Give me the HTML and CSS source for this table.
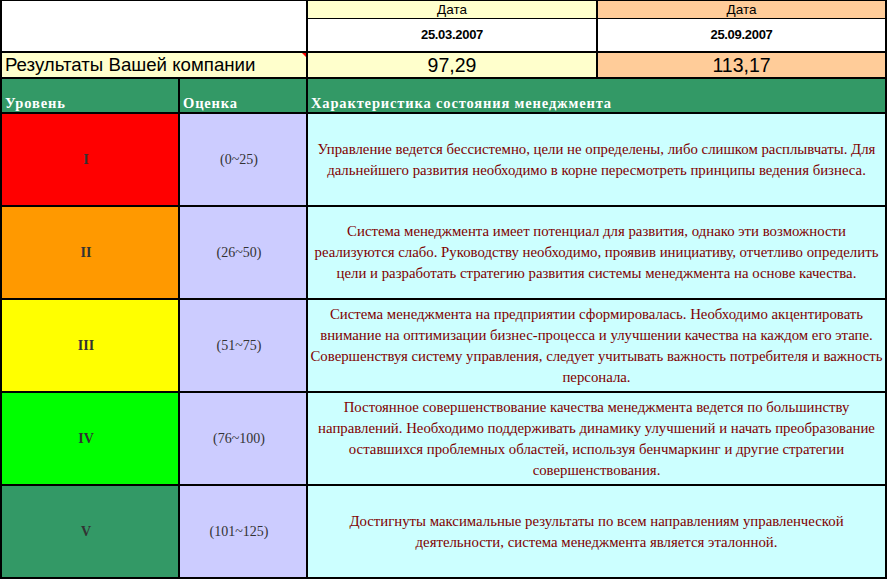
FILE: index.html
```html
<!DOCTYPE html>
<html lang="ru">
<head>
<meta charset="utf-8">
<title>Результаты</title>
<link rel="stylesheet" href="styles.css">
</head>
<body>
<div class="sheet">
  <div class="cell blank span2"></div>
  <div class="datecol">
    <div class="dhead yellow">Дата</div>
    <div class="dval">25.03.2007</div>
  </div>
  <div class="datecol">
    <div class="dhead peach">Дата</div>
    <div class="dval">25.09.2007</div>
  </div>

  <div class="cell result-label span2">Результаты Вашей компании</div>
  <div class="cell result-val yellow">97,29</div>
  <div class="cell result-val peach">113,17</div>

  <div class="cell hdr">Уровень</div>
  <div class="cell hdr">Оценка</div>
  <div class="cell hdr span2">Характеристика состояния менеджмента</div>

  <div class="cell level lv1">I</div>
  <div class="cell score">(0~25)</div>
  <div class="cell desc span2"><p>Управление ведется бессистемно, цели не определены, либо слишком расплывчаты. Для<br>дальнейшего развития необходимо в корне пересмотреть принципы ведения бизнеса.</p></div>

  <div class="cell level lv2">II</div>
  <div class="cell score">(26~50)</div>
  <div class="cell desc span2"><p>Система менеджмента имеет потенциал для развития, однако эти возможности<br>реализуются слабо. Руководству необходимо, проявив инициативу, отчетливо определить<br>цели и разработать стратегию развития системы менеджмента на основе качества.</p></div>

  <div class="cell level lv3">III</div>
  <div class="cell score">(51~75)</div>
  <div class="cell desc span2"><p>Система менеджмента на предприятии сформировалась. Необходимо акцентировать<br>внимание на оптимизации бизнес-процесса и улучшении качества на каждом его этапе.<br>Совершенствуя систему управления, следует учитывать важность потребителя и важность<br>персонала.</p></div>

  <div class="cell level lv4">IV</div>
  <div class="cell score">(76~100)</div>
  <div class="cell desc span2"><p>Постоянное совершенствование качества менеджмента ведется по большинству<br>направлений. Необходимо поддерживать динамику улучшений и начать преобразование<br>оставшихся проблемных областей, используя бенчмаркинг и другие стратегии<br>совершенствования.</p></div>

  <div class="cell level lv5">V</div>
  <div class="cell score">(101~125)</div>
  <div class="cell desc span2"><p>Достигнуты максимальные результаты по всем направлениям управленческой<br>деятельности, система менеджмента является эталонной.</p></div>
</div>
</body>
</html>
```

FILE: styles.css
```css
html, body {
  margin: 0;
  padding: 0;
  background: #000;
}

.sheet {
  display: grid;
  grid-template-columns: 176px 126px 288px 287px;
  grid-template-rows: 50px 24px 33px repeat(5, 91px);
  gap: 2px;
  padding: 1px 2px 2px 2px;
  width: 887px;
  height: 579px;
  box-sizing: border-box;
  background: #000;
  font-family: "Liberation Sans", Arial, sans-serif;
}

.cell {
  display: flex;
  align-items: center;
  justify-content: center;
  min-width: 0;
  overflow: hidden;
}

.span2 {
  grid-column: span 2;
}

.blank {
  background: #fff;
}

.yellow {
  background: #ffffcc;
}

.peach {
  background: #ffcc99;
}

.datecol {
  display: flex;
  flex-direction: column;
  gap: 1px;
  background: #000;
}

.dhead {
  height: 17px;
  display: flex;
  align-items: center;
  justify-content: center;
  font-size: 13.5px;
  color: #000;
}

.dval {
  flex: 1;
  background: #fff;
  display: flex;
  align-items: center;
  justify-content: center;
  font-size: 13px;
  font-weight: bold;
  letter-spacing: -0.3px;
  padding-bottom: 1px;
}

.result-label {
  position: relative;
  justify-content: flex-start;
  padding-left: 3px;
  background: #ffffcc;
  font-size: 18.67px;
  color: #000;
}

.result-label::after {
  content: "";
  position: absolute;
  top: 0;
  right: 0;
  border-left: 4px solid transparent;
  border-top: 4px solid #ff0000;
}

.result-val {
  font-size: 19.5px;
  color: #000;
}

.hdr {
  background: #339966;
  color: #fff;
  font-family: "Liberation Serif", "Times New Roman", serif;
  font-weight: bold;
  font-size: 14.5px;
  line-height: 15px;
  letter-spacing: 0.85px;
  align-items: flex-end;
  justify-content: flex-start;
  padding-left: 3px;
  padding-bottom: 1px;
}

.level {
  font-family: "Liberation Serif", "Times New Roman", serif;
  font-weight: bold;
  font-size: 14px;
  color: #333;
  padding-right: 8px;
}

.lv1 { background: #ff0000; }
.lv2 { background: #ff9900; }
.lv3 { background: #ffff00; }
.lv4 { background: #00ff00; }
.lv5 { background: #339966; }

.score {
  background: #ccccff;
  font-family: "Liberation Serif", "Times New Roman", serif;
  font-size: 14px;
  color: #333;
  padding-right: 8px;
}

.desc {
  background: #ccffff;
  font-family: "Liberation Serif", "Times New Roman", serif;
  font-size: 14.8px;
  color: #800000;
  text-align: center;
}

.desc p {
  margin: 0;
  line-height: 21px;
  white-space: nowrap;
}
```
